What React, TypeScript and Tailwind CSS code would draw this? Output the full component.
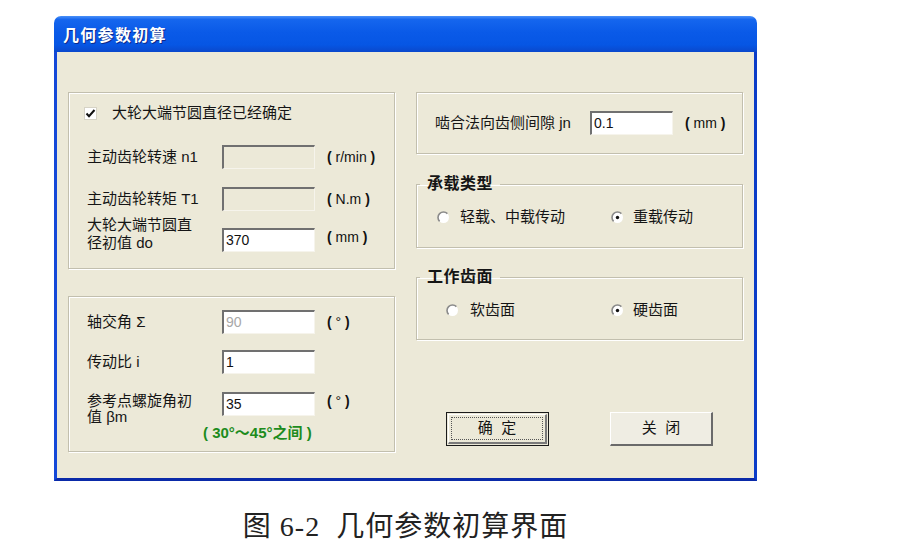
import React from "react";

function Input({ value, gray, disabled, w }: { value?: string; gray?: boolean; disabled?: boolean; w: string }) {
  return (
    <div
      className={`${w} h-[24px] border-t-2 border-l-2 border-b border-r border-t-[#707070] border-l-[#707070] border-b-[#f6f4ec] border-r-[#f6f4ec] ${
        disabled ? "bg-[#ece9d8]" : "bg-white"
      } flex items-center pl-[2px] text-[14px] font-['Liberation_Sans',sans-serif] ${gray ? "text-[#a8a8a8]" : "text-[#111]"}`}
    >
      {value}
    </div>
  );
}

function Unit({ children, className }: { children: React.ReactNode; className?: string }) {
  return (
    <div className={`text-[14px] leading-[18px] text-[#111] whitespace-pre ${className ?? ""}`}>
      <span className="font-bold">(</span> {children} <span className="font-bold">)</span>
    </div>
  );
}

function Radio({ checked }: { checked?: boolean }) {
  return (
    <svg width="13" height="13" viewBox="0 0 13 13" className="shrink-0">
      <circle cx="6.5" cy="6.5" r="5.5" fill="#ffffff" />
      <path d="M2.61 10.39 A5.5 5.5 0 0 1 10.39 2.61" fill="none" stroke="#8a8a8a" strokeWidth="1.6" />
      {checked && <circle cx="6.5" cy="6.5" r="1.7" fill="#111" />}
    </svg>
  );
}

function Checkbox() {
  return (
    <div className="w-[13px] h-[13px] bg-white border border-[#d6d3c6] flex items-center justify-center shrink-0">
      <svg width="11" height="11" viewBox="0 0 11 11">
        <path d="M1.5 5.5 L4 8.2 L9.5 2" fill="none" stroke="#111" strokeWidth="2" />
      </svg>
    </div>
  );
}

const groupCls = "border border-[#c2bfae] shadow-[inset_1px_1px_0_#ffffff,1px_1px_0_#ffffff]";

export default function App() {
  return (
    <div className="w-[910px] h-[558px] bg-white overflow-hidden font-['Liberation_Sans','Noto_Sans_CJK_SC',sans-serif] text-[#151515]">
      <div className="pt-[16px] pl-[54px]">
        {/* window */}
        <div className="w-[703px] h-[465px] flex flex-col">
          <div className="h-[36px] rounded-t-[7px] bg-[linear-gradient(180deg,#4a90f8_0%,#1566ee_10%,#0a5ae8_45%,#0656e4_80%,#0a48cc_100%)] flex items-center pl-[9px]">
            <span className="text-white font-bold text-[16px] tracking-[1.3px] [text-shadow:1px_1px_0_#0b2a8a] font-['Noto_Sans_CJK_SC',sans-serif]">
              几何参数初算
            </span>
          </div>
          <div className="flex-1 bg-[#ece9d8] border-l-[3px] border-r-[3px] border-b-[3px] border-l-[#1448d8] border-r-[#0a3cc8] border-b-[#0a2aa8] flex gap-[21px] pl-[11px] pt-[40px]">
            {/* left column */}
            <div className="w-[327px] flex flex-col">
              <div className={`${groupCls} h-[177px] pt-[11px]`}>
                <div className="flex items-center h-[18px] pl-[15px]">
                  <Checkbox />
                  <span className="ml-[15px] text-[15px] leading-[18px]">大轮大端节圆直径已经确定</span>
                </div>
                <div className="flex items-center h-[24px] mt-[23px] pl-[18px]">
                  <div className="w-[135px] text-[15px] leading-[18px]">主动齿轮转速 n1</div>
                  <Input w="w-[93px]" disabled />
                  <Unit className="ml-[12px]">r/min</Unit>
                </div>
                <div className="flex items-center h-[24px] mt-[18px] pl-[18px]">
                  <div className="w-[135px] text-[15px] leading-[18px]">主动齿轮转矩 T1</div>
                  <Input w="w-[93px]" disabled />
                  <Unit className="ml-[12px]">N.m</Unit>
                </div>
                <div className="flex items-end mt-[5px] pl-[18px]">
                  <div className="w-[135px] text-[15px] leading-[18px]">
                    大轮大端节圆直
                    <br />
                    径初值 do
                  </div>
                  <Input w="w-[93px]" value="370" />
                  <Unit className="ml-[12px] mb-[6px]">mm</Unit>
                </div>
              </div>

              <div className={`${groupCls} h-[156px] mt-[27px] pt-[13px]`}>
                <div className="flex items-center h-[24px] pl-[18px]">
                  <div className="w-[135px] text-[15px] leading-[18px]">轴交角 Σ</div>
                  <Input w="w-[93px]" value="90" gray />
                  <Unit className="ml-[12px]">°</Unit>
                </div>
                <div className="flex items-center h-[24px] mt-[16px] pl-[18px]">
                  <div className="w-[135px] text-[15px] leading-[18px]">传动比 i</div>
                  <Input w="w-[93px]" value="1" />
                </div>
                <div className="flex items-start mt-[18px] pl-[18px]">
                  <div className="w-[135px] mt-[1px] text-[15px] leading-[16px]">
                    参考点螺旋角初
                    <br />
                    值 βm
                  </div>
                  <Input w="w-[93px]" value="35" />
                  <Unit className="ml-[12px]">°</Unit>
                </div>
                <div className="h-[16px] mt-[0px] pl-[134px] text-[15px] leading-[16px] font-bold text-[#1d8c1d] whitespace-pre">
                  ( 30°～45°之间 )
                </div>
              </div>
            </div>

            {/* right column */}
            <div className="w-[327px] flex flex-col">
              <div className={`${groupCls} h-[62px] flex items-center pl-[18px]`}>
                <div className="w-[155px] text-[15px] leading-[18px]">啮合法向齿侧间隙 jn</div>
                <Input w="w-[83px]" value="0.1" />
                <Unit className="ml-[12px]">mm</Unit>
              </div>

              <fieldset className={`${groupCls} h-[73px] mt-[21px]`}>
                <legend className="ml-[3px] px-[7px] text-[16px] leading-[18px] font-bold tracking-[0.5px]">承载类型</legend>
                <div className="flex items-center h-[16px] mt-[16px] pl-[20px]">
                  <div className="w-[174px] flex items-center">
                    <Radio />
                    <span className="ml-[10px] text-[15px] leading-[16px]">轻载、中载传动</span>
                  </div>
                  <div className="flex items-center">
                    <Radio checked />
                    <span className="ml-[9px] text-[15px] leading-[16px]">重载传动</span>
                  </div>
                </div>
              </fieldset>

              <fieldset className={`${groupCls} h-[72px] mt-[20px]`}>
                <legend className="ml-[3px] px-[7px] text-[16px] leading-[18px] font-bold tracking-[0.5px]">工作齿面</legend>
                <div className="flex items-center h-[16px] mt-[16px] pl-[29px]">
                  <div className="w-[165px] flex items-center">
                    <Radio />
                    <span className="ml-[11px] text-[15px] leading-[16px]">软齿面</span>
                  </div>
                  <div className="flex items-center">
                    <Radio checked />
                    <span className="ml-[9px] text-[15px] leading-[16px]">硬齿面</span>
                  </div>
                </div>
              </fieldset>

              <div className="flex mt-[72px] pl-[30px] gap-[61px]">
                <div className="w-[103px] h-[34px] border border-[#1a1a1a] bg-[#ece9d8] p-[1px]">
                  <div className="w-full h-full border-t border-l border-t-white border-l-white border-b-2 border-r-2 border-b-[#7a7a7a] border-r-[#7a7a7a] p-[2px]">
                    <div className="w-full h-full border border-dotted border-[#555] flex items-center justify-center text-[15px] whitespace-pre">
                      确  定
                    </div>
                  </div>
                </div>
                <div className="w-[103px] h-[34px] bg-[#efede3] border-t border-l border-t-white border-l-white border-b-2 border-r-2 border-b-[#6a6a6a] border-r-[#6a6a6a] flex items-center justify-center text-[15px] whitespace-pre">
                  关  闭
                </div>
              </div>
            </div>
          </div>
        </div>
        {/* caption */}
        <div className="w-[703px] mt-[30px] text-center text-[28px] leading-[32px] tracking-[1px] text-[#222] font-['Liberation_Serif','Noto_Sans_CJK_SC',serif] whitespace-pre">
          图 6-2  几何参数初算界面
        </div>
      </div>
    </div>
  );
}
